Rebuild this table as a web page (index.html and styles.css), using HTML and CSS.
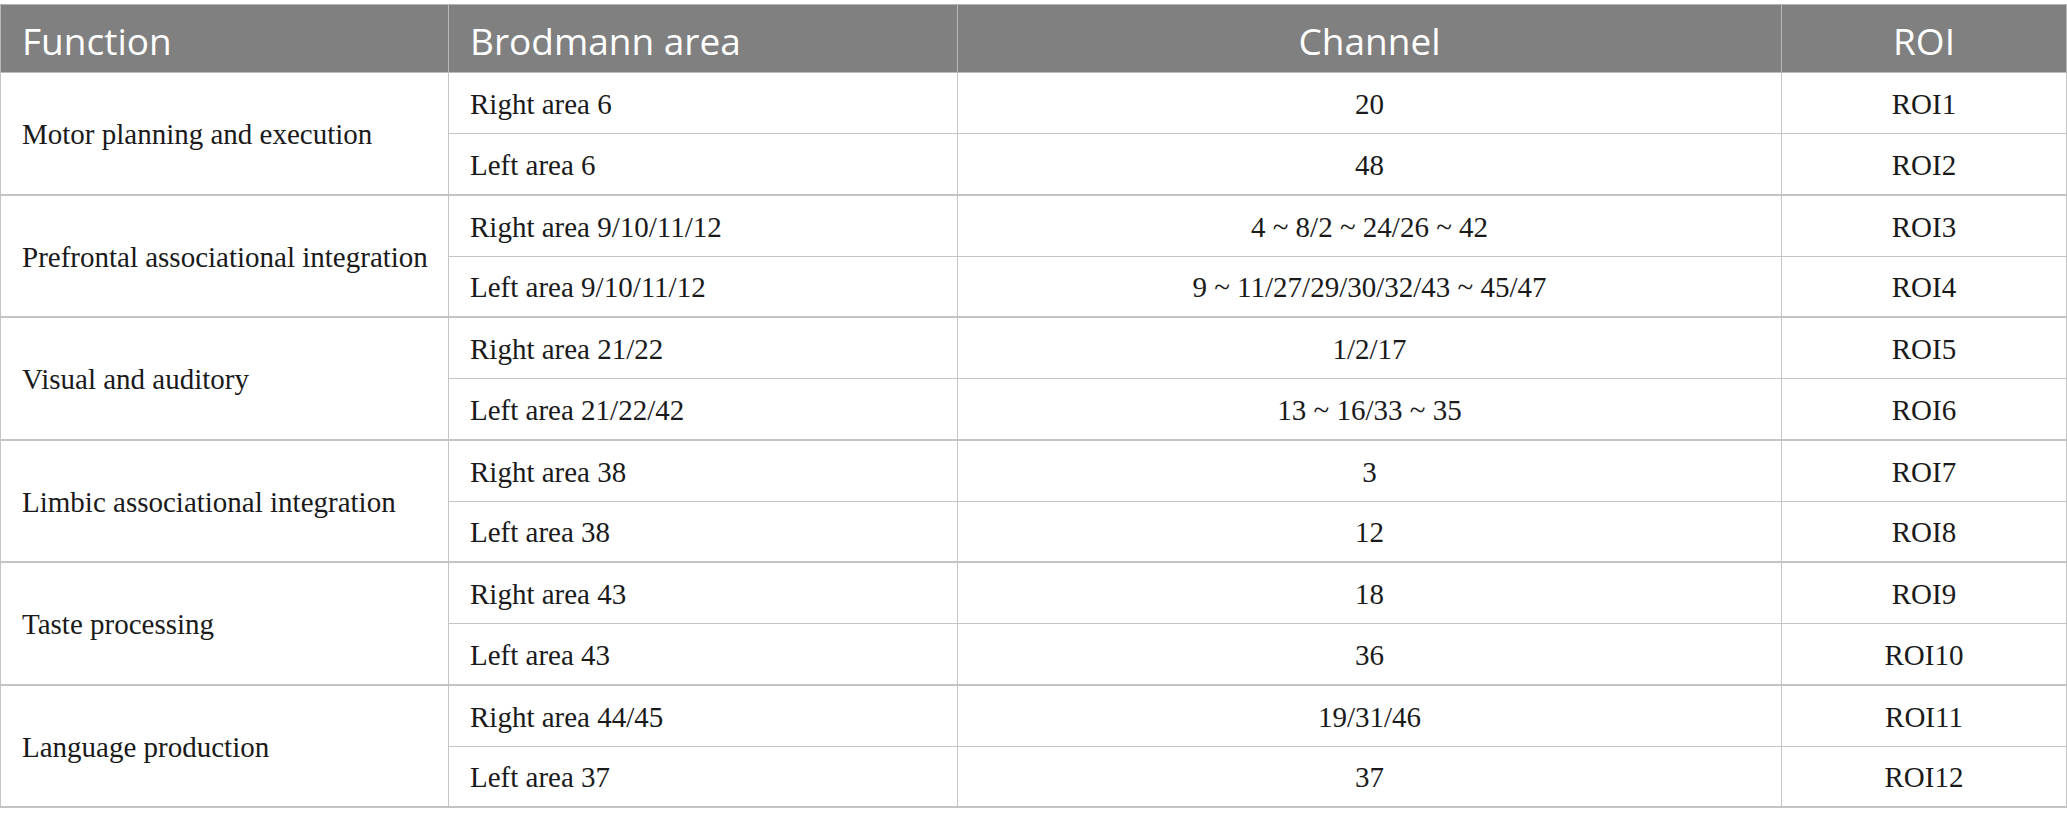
FILE: index.html
```html
<!DOCTYPE html>
<html lang="en">
<head>
<meta charset="utf-8">
<title>Brodmann areas and ROIs</title>
<link rel="stylesheet" href="styles.css">
</head>
<body>
<table class="roi-table">
  <colgroup>
    <col class="c-func">
    <col class="c-area">
    <col class="c-chan">
    <col class="c-roi">
  </colgroup>
  <thead>
    <tr>
      <th class="left">Function</th>
      <th class="left">Brodmann area</th>
      <th>Channel</th>
      <th>ROI</th>
    </tr>
  </thead>
  <tbody>
    <tr class="first">
      <td class="func" rowspan="2">Motor planning and execution</td>
      <td class="left">Right area 6</td>
      <td>20</td>
      <td>ROI1</td>
    </tr>
    <tr class="last">
      <td class="left">Left area 6</td>
      <td>48</td>
      <td>ROI2</td>
    </tr>
    <tr class="first">
      <td class="func" rowspan="2">Prefrontal associational integration</td>
      <td class="left">Right area 9/10/11/12</td>
      <td>4 ~ 8/2 ~ 24/26 ~ 42</td>
      <td>ROI3</td>
    </tr>
    <tr class="last">
      <td class="left">Left area 9/10/11/12</td>
      <td>9 ~ 11/27/29/30/32/43 ~ 45/47</td>
      <td>ROI4</td>
    </tr>
    <tr class="first">
      <td class="func" rowspan="2">Visual and auditory</td>
      <td class="left">Right area 21/22</td>
      <td>1/2/17</td>
      <td>ROI5</td>
    </tr>
    <tr class="last">
      <td class="left">Left area 21/22/42</td>
      <td>13 ~ 16/33 ~ 35</td>
      <td>ROI6</td>
    </tr>
    <tr class="first">
      <td class="func" rowspan="2">Limbic associational integration</td>
      <td class="left">Right area 38</td>
      <td>3</td>
      <td>ROI7</td>
    </tr>
    <tr class="last">
      <td class="left">Left area 38</td>
      <td>12</td>
      <td>ROI8</td>
    </tr>
    <tr class="first">
      <td class="func" rowspan="2">Taste processing</td>
      <td class="left">Right area 43</td>
      <td>18</td>
      <td>ROI9</td>
    </tr>
    <tr class="last">
      <td class="left">Left area 43</td>
      <td>36</td>
      <td>ROI10</td>
    </tr>
    <tr class="first">
      <td class="func" rowspan="2">Language production</td>
      <td class="left">Right area 44/45</td>
      <td>19/31/46</td>
      <td>ROI11</td>
    </tr>
    <tr class="last">
      <td class="left">Left area 37</td>
      <td>37</td>
      <td>ROI12</td>
    </tr>
  </tbody>
</table>
</body>
</html>
```

FILE: styles.css
```css
html, body {
  margin: 0;
  padding: 0;
  background: #ffffff;
}

body {
  padding-top: 4px;
}

.roi-table {
  width: 2066px;
  border-collapse: collapse;
  table-layout: fixed;
  font-family: "Liberation Serif", "Times New Roman", serif;
  font-size: 29px;
  color: #1a1a1a;
}

.c-func { width: 448px; }
.c-area { width: 509px; }
.c-chan { width: 824px; }
.c-roi  { width: 285px; }

.roi-table th {
  background: #7f807f;
  color: #ffffff;
  font-family: "Open Sans", "Liberation Sans", sans-serif;
  font-weight: 400;
  font-size: 37px;
  height: 64px;
  padding: 3px 21px 0;
  text-align: center;
  border: 1px solid #b9b9b9;
  border-top: 1px solid #b5b5b5;
  vertical-align: middle;
  line-height: 1;
  white-space: nowrap;
}

.roi-table td {
  height: 57px;
  padding: 3px 21px 0;
  text-align: center;
  border-left: 1px solid #c4c4c4;
  border-right: 1px solid #c4c4c4;
  border-bottom: 1px solid #c4c4c4;
  vertical-align: middle;
  line-height: 1.2;
  white-space: nowrap;
}

.roi-table tr.last td {
  height: 56.5px;
}

.roi-table th.left,
.roi-table td.left,
.roi-table td.func {
  text-align: left;
}

.roi-table td.func {
  padding-right: 8px;
}

.roi-table tr.last td,
.roi-table td.func {
  border-bottom: 2px solid #c4c4c4;
}
```
